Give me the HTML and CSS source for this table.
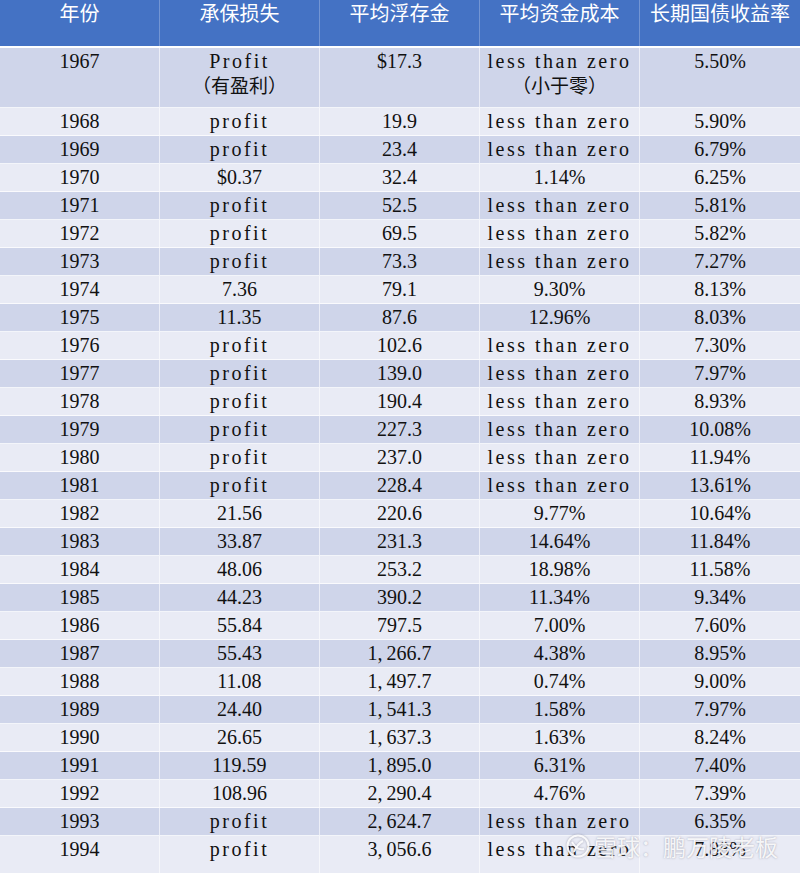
FILE: index.html
```html
<!DOCTYPE html>
<html lang="zh-CN">
<head>
<meta charset="utf-8">
<title>浮存金成本</title>
<link rel="stylesheet" href="styles.css">
</head>
<body>
<div class="sheet">
  <div class="row head">
    <div class="c">年份</div><div class="c">承保损失</div><div class="c">平均浮存金</div><div class="c">平均资金成本</div><div class="c">长期国债收益率</div>
  </div>
  <div class="row dark tall">
    <div class="c">1967</div>
    <div class="c"><span class="w">Profit</span><br><span class="cjk">（有盈利）</span></div>
    <div class="c">$17.3</div>
    <div class="c"><span class="w">less than zero</span><br><span class="cjk">（小于零）</span></div>
    <div class="c">5.50%</div>
  </div>
  <div class="row light"><div class="c">1968</div><div class="c w">profit</div><div class="c">19.9</div><div class="c w">less than zero</div><div class="c">5.90%</div></div>
  <div class="row dark"><div class="c">1969</div><div class="c w">profit</div><div class="c">23.4</div><div class="c w">less than zero</div><div class="c">6.79%</div></div>
  <div class="row light"><div class="c">1970</div><div class="c">$0.37</div><div class="c">32.4</div><div class="c">1.14%</div><div class="c">6.25%</div></div>
  <div class="row dark"><div class="c">1971</div><div class="c w">profit</div><div class="c">52.5</div><div class="c w">less than zero</div><div class="c">5.81%</div></div>
  <div class="row light"><div class="c">1972</div><div class="c w">profit</div><div class="c">69.5</div><div class="c w">less than zero</div><div class="c">5.82%</div></div>
  <div class="row dark"><div class="c">1973</div><div class="c w">profit</div><div class="c">73.3</div><div class="c w">less than zero</div><div class="c">7.27%</div></div>
  <div class="row light"><div class="c">1974</div><div class="c">7.36</div><div class="c">79.1</div><div class="c">9.30%</div><div class="c">8.13%</div></div>
  <div class="row dark"><div class="c">1975</div><div class="c">11.35</div><div class="c">87.6</div><div class="c">12.96%</div><div class="c">8.03%</div></div>
  <div class="row light"><div class="c">1976</div><div class="c w">profit</div><div class="c">102.6</div><div class="c w">less than zero</div><div class="c">7.30%</div></div>
  <div class="row dark"><div class="c">1977</div><div class="c w">profit</div><div class="c">139.0</div><div class="c w">less than zero</div><div class="c">7.97%</div></div>
  <div class="row light"><div class="c">1978</div><div class="c w">profit</div><div class="c">190.4</div><div class="c w">less than zero</div><div class="c">8.93%</div></div>
  <div class="row dark"><div class="c">1979</div><div class="c w">profit</div><div class="c">227.3</div><div class="c w">less than zero</div><div class="c">10.08%</div></div>
  <div class="row light"><div class="c">1980</div><div class="c w">profit</div><div class="c">237.0</div><div class="c w">less than zero</div><div class="c">11.94%</div></div>
  <div class="row dark"><div class="c">1981</div><div class="c w">profit</div><div class="c">228.4</div><div class="c w">less than zero</div><div class="c">13.61%</div></div>
  <div class="row light"><div class="c">1982</div><div class="c">21.56</div><div class="c">220.6</div><div class="c">9.77%</div><div class="c">10.64%</div></div>
  <div class="row dark"><div class="c">1983</div><div class="c">33.87</div><div class="c">231.3</div><div class="c">14.64%</div><div class="c">11.84%</div></div>
  <div class="row light"><div class="c">1984</div><div class="c">48.06</div><div class="c">253.2</div><div class="c">18.98%</div><div class="c">11.58%</div></div>
  <div class="row dark"><div class="c">1985</div><div class="c">44.23</div><div class="c">390.2</div><div class="c">11.34%</div><div class="c">9.34%</div></div>
  <div class="row light"><div class="c">1986</div><div class="c">55.84</div><div class="c">797.5</div><div class="c">7.00%</div><div class="c">7.60%</div></div>
  <div class="row dark"><div class="c">1987</div><div class="c">55.43</div><div class="c">1,&#8201;266.7</div><div class="c">4.38%</div><div class="c">8.95%</div></div>
  <div class="row light"><div class="c">1988</div><div class="c">11.08</div><div class="c">1,&#8201;497.7</div><div class="c">0.74%</div><div class="c">9.00%</div></div>
  <div class="row dark"><div class="c">1989</div><div class="c">24.40</div><div class="c">1,&#8201;541.3</div><div class="c">1.58%</div><div class="c">7.97%</div></div>
  <div class="row light"><div class="c">1990</div><div class="c">26.65</div><div class="c">1,&#8201;637.3</div><div class="c">1.63%</div><div class="c">8.24%</div></div>
  <div class="row dark"><div class="c">1991</div><div class="c">119.59</div><div class="c">1,&#8201;895.0</div><div class="c">6.31%</div><div class="c">7.40%</div></div>
  <div class="row light"><div class="c">1992</div><div class="c">108.96</div><div class="c">2,&#8201;290.4</div><div class="c">4.76%</div><div class="c">7.39%</div></div>
  <div class="row dark"><div class="c">1993</div><div class="c w">profit</div><div class="c">2,&#8201;624.7</div><div class="c w">less than zero</div><div class="c">6.35%</div></div>
  <div class="row light last"><div class="c">1994</div><div class="c w">profit</div><div class="c">3,&#8201;056.6</div><div class="c w">less than zero</div><div class="c">7.88%</div></div>

  <div class="mark">
    <svg class="logo" width="24" height="24" viewBox="0 0 24 24" aria-hidden="true">
      <circle cx="12" cy="12" r="10.5" fill="none" stroke="currentColor" stroke-width="2"/>
      <path d="M6 8 C9 14, 14 16, 18 15" fill="none" stroke="currentColor" stroke-width="2"/>
      <path d="M8 18 C10 13, 13 9, 17 7" fill="none" stroke="currentColor" stroke-width="2"/>
    </svg>
    <span>雪球：鹏万陵老板</span>
  </div>
</div>
</body>
</html>
```

FILE: styles.css
```css
* { box-sizing: border-box; }
html, body { margin: 0; padding: 0; background: #E9EBF5; }
.sheet {
  position: relative;
  width: 800px;
  font-family: "Liberation Serif", "Noto Sans CJK SC", serif;
  font-size: 20px;
  color: #111;
}
.row {
  display: grid;
  grid-template-columns: 160px 160px 160px 160px 160px;
  height: 28px;
  border-bottom: 1px solid rgba(255,255,255,0.75);
}
.c {
  text-align: center;
  line-height: 24px;
  padding-top: 1px;
  border-right: 1px solid rgba(255,255,255,0.6);
  white-space: nowrap;
}
.c:last-child { border-right: none; }
.head {
  height: 48px;
  background: #4472C4;
  border-bottom: 2px solid #fff;
  color: #fff;
  font-family: "Noto Sans CJK SC", sans-serif;
  font-size: 20px;
}
.head .c { border-right-color: rgba(255,255,255,0.25); padding-top: 2px; line-height: 22px; }
.dark { background: #CFD5EA; }
.light { background: #E9EBF5; }
.tall { height: 60px; }
.last { height: 37px; border-bottom: none; }
.w { letter-spacing: 2.5px; }
.cjk { font-family: "Noto Sans CJK SC", sans-serif; font-size: 19px; }
.mark {
  position: absolute;
  left: 566px;
  top: 833px;
  display: flex;
  align-items: center;
  gap: 4px;
  color: rgba(255,255,255,0.9);
  font-family: "Noto Sans CJK SC", sans-serif;
  font-size: 23px;
  line-height: 26px;
  text-shadow: 0 0 2px rgba(110,110,130,0.6);
}
.logo { filter: drop-shadow(0 0 1px rgba(110,110,130,0.6)); }
```
